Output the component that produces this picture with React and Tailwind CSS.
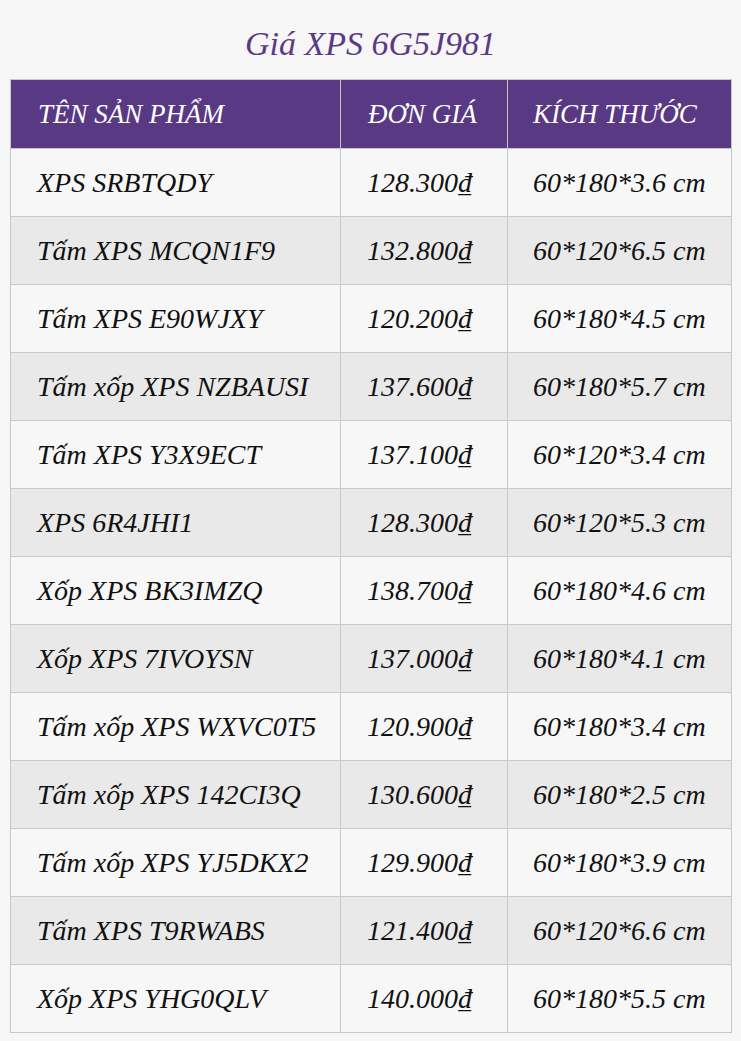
import React from "react";

const rows = [
  ["XPS SRBTQDY", "128.300₫", "60*180*3.6 cm"],
  ["Tấm XPS MCQN1F9", "132.800₫", "60*120*6.5 cm"],
  ["Tấm XPS E90WJXY", "120.200₫", "60*180*4.5 cm"],
  ["Tấm xốp XPS NZBAUSI", "137.600₫", "60*180*5.7 cm"],
  ["Tấm XPS Y3X9ECT", "137.100₫", "60*120*3.4 cm"],
  ["XPS 6R4JHI1", "128.300₫", "60*120*5.3 cm"],
  ["Xốp XPS BK3IMZQ", "138.700₫", "60*180*4.6 cm"],
  ["Xốp XPS 7IVOYSN", "137.000₫", "60*180*4.1 cm"],
  ["Tấm xốp XPS WXVC0T5", "120.900₫", "60*180*3.4 cm"],
  ["Tấm xốp XPS 142CI3Q", "130.600₫", "60*180*2.5 cm"],
  ["Tấm xốp XPS YJ5DKX2", "129.900₫", "60*180*3.9 cm"],
  ["Tấm XPS T9RWABS", "121.400₫", "60*120*6.6 cm"],
  ["Xốp XPS YHG0QLV", "140.000₫", "60*180*5.5 cm"],
];

const serif = { fontFamily: "'Liberation Serif', 'Times New Roman', serif" };

export default function App() {
  return (
    <div className="[font-family:Liberation_Serif]" style={serif}>
      <div className="min-h-[1041px] bg-[#f6f6f6] px-[10px] pt-[24px] pb-[10px] italic">
        <h2 className="text-center text-[34px] leading-[40px] text-[#5b3a85] mb-[15px]" style={serif}>
          Giá XPS 6G5J981
        </h2>
        <table className="w-[721px] border-collapse table-fixed text-[28px] leading-[32px]" style={serif}>
          <colgroup>
            <col className="w-[330px]" />
            <col className="w-[167px]" />
            <col className="w-[224px]" />
          </colgroup>
          <thead>
            <tr className="bg-[#593983] text-white h-[69px] text-[27px]">
              <th className="border border-[#c8c8c8] pl-[27px] text-left font-normal">TÊN SẢN PHẨM</th>
              <th className="border border-[#c8c8c8] pl-[27px] text-left font-normal">ĐƠN GIÁ</th>
              <th className="border border-[#c8c8c8] pl-[25px] text-left font-normal">KÍCH THƯỚC</th>
            </tr>
          </thead>
          <tbody className="text-[#111]">
            {rows.map((r, i) => (
              <tr key={i} className={`h-[68px] ${i % 2 === 0 ? "bg-[#f7f7f7]" : "bg-[#e9e9e9]"}`}>
                <td className="border border-[#c8c8c8] pl-[26px]">{r[0]}</td>
                <td className="border border-[#c8c8c8] pl-[26px]">{r[1]}</td>
                <td className="border border-[#c8c8c8] pl-[25px]">{r[2]}</td>
              </tr>
            ))}
          </tbody>
        </table>
      </div>
    </div>
  );
}
